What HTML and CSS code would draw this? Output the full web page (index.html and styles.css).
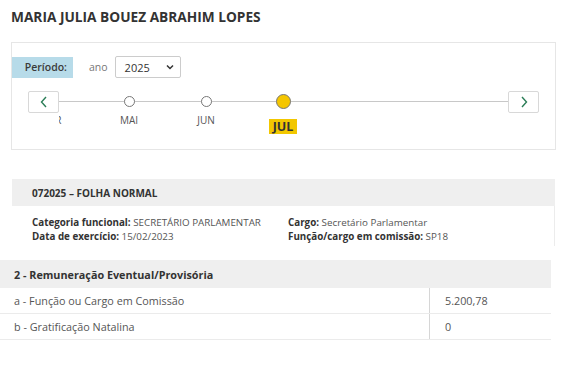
FILE: index.html
```html
<!DOCTYPE html>
<html lang="pt-BR">
<head>
<meta charset="utf-8">
<link rel="stylesheet" href="styles.css">
</head>
<body>
<h1 class="name">MARIA JULIA BOUEZ ABRAHIM LOPES</h1>

<div class="card">
  <div class="periodo">
    <span class="periodo-label">Período:</span>
    <span class="ano">ano</span>
    <div class="select"><span>2025</span>
      <svg class="caret" width="8" height="6" viewBox="0 0 8 6"><path d="M1 1.5 L4 4.5 L7 1.5" fill="none" stroke="#333" stroke-width="1.5"/></svg>
    </div>
  </div>
  <div class="timeline">
    <button class="nav"><svg width="8" height="12" viewBox="0 0 8 12"><path d="M6 1 L1.5 6 L6 11" fill="none" stroke="#2b7d57" stroke-width="1.4"/></svg></button>
    <div class="track">
      <div class="months">
        <div class="month"><span class="dot"></span><span class="mlabel">ABR</span></div>
        <div class="month"><span class="dot"></span><span class="mlabel">MAI</span></div>
        <div class="month"><span class="dot"></span><span class="mlabel">JUN</span></div>
        <div class="month active"><span class="dot"></span><span class="mlabel">JUL</span></div>
      </div>
    </div>
    <button class="nav"><svg width="8" height="12" viewBox="0 0 8 12"><path d="M2 1 L6.5 6 L2 11" fill="none" stroke="#2b7d57" stroke-width="1.4"/></svg></button>
  </div>
</div>

<div class="folha">
  <div class="folha-head">072025 – FOLHA NORMAL</div>
  <div class="folha-body">
    <div><b>Categoria funcional:</b> SECRETÁRIO PARLAMENTAR</div>
    <div><b>Cargo:</b> Secretário Parlamentar</div>
    <div><b>Data de exercício:</b> 15/02/2023</div>
    <div><b>Função/cargo em comissão:</b> SP18</div>
  </div>
</div>

<div class="table">
  <div class="thead">2 - Remuneração Eventual/Provisória</div>
  <div class="row"><div class="cell name-cell">a - Função ou Cargo em Comissão</div><div class="cell val">5.200,78</div></div>
  <div class="row"><div class="cell name-cell">b - Gratificação Natalina</div><div class="cell val">0</div></div>
</div>
</body>
</html>
```
FILE: styles.css
```css
* { box-sizing: border-box; }
body {
  margin: 0;
  font-family: "Open Sans", "DejaVu Sans", sans-serif;
  color: #444;
  background: #fff;
}
.name {
  margin: 0;
  padding: 7px 0 0 11px;
  font-size: 13.7px;
  line-height: 20px;
  font-weight: 700;
  color: #333;
}
.card {
  margin: 15px 12px 0 11px;
  height: 108px;
  border: 1px solid #e6e6e6;
}
.periodo {
  display: flex;
  align-items: center;
  margin-top: 13px;
  height: 22px;
}
.periodo-label {
  width: 61px;
  height: 21px;
  background: #b7dbe9;
  font-size: 10.5px;
  font-weight: 600;
  color: #3a3a3a;
  display: flex;
  align-items: center;
  justify-content: flex-end;
  padding-right: 6px;
}
.ano {
  margin-left: 16px;
  font-size: 10.5px;
  color: #777;
}
.select {
  margin-left: 7px;
  width: 66px;
  height: 22px;
  border: 1px solid #ccc;
  border-radius: 2px;
  display: flex;
  align-items: center;
  justify-content: space-between;
  padding: 0 6px 0 9px;
  font-size: 11px;
  color: #333;
}
.timeline {
  display: flex;
  align-items: flex-start;
  margin: 13px 16px 0 16px;
}
.nav {
  width: 31px;
  height: 22px;
  border: 1px solid #d8d8d8;
  border-radius: 2px;
  background: #fff;
  padding: 0;
  display: flex;
  align-items: center;
  justify-content: center;
  flex: none;
}
.track {
  flex: 1;
  height: 46px;
  position: relative;
  overflow: hidden;
}
.track::before {
  content: "";
  position: absolute;
  left: 0;
  right: 0;
  top: 10px;
  height: 1px;
  background: #c8c8c8;
}
.months {
  display: flex;
  margin-left: -45.5px;
  position: relative;
}
.month {
  width: 77px;
  flex: none;
  display: flex;
  flex-direction: column;
  align-items: center;
}
.dot {
  width: 11px;
  height: 11px;
  margin-top: 5px;
  border: 1px solid #777;
  border-radius: 50%;
  background: #fff;
}
.mlabel {
  margin-top: 6px;
  font-size: 10px;
  line-height: 14px;
  color: #555;
}
.month.active .dot {
  width: 15px;
  height: 15px;
  margin-top: 3px;
  background: #f5c600;
  border-color: #777;
}
.month.active .mlabel {
  margin-top: 10px;
  line-height: 15px;
  padding: 0 4px;
  background: #f2c700;
  font-weight: 700;
  font-size: 12.5px;
  color: #333;
}
.folha {
  margin: 29px 13px 0 12px;
}
.folha-head {
  height: 27px;
  background: #efefef;
  font-size: 10px;
  font-weight: 700;
  color: #333;
  display: flex;
  align-items: center;
  padding-left: 20px;
}
.folha-body {
  display: grid;
  grid-template-columns: 256px 1fr;
  padding: 10px 0 2px 20px;
  border-right: 1px solid #ececec;
  font-size: 9.8px;
  line-height: 14px;
  color: #555;
}
.folha-body b {
  font-weight: 700;
  color: #333;
}
.table {
  margin: 14px 17px 0 0;
  font-size: 10.8px;
  color: #555;
}
.thead {
  height: 28px;
  background: #efefef;
  font-weight: 700;
  color: #333;
  display: flex;
  align-items: center;
  padding-left: 14px;
}
.row {
  display: flex;
  height: 26px;
  border-bottom: 1px solid #ebebeb;
}
.cell {
  display: flex;
  align-items: center;
}
.name-cell {
  width: 430px;
  padding-left: 14px;
  border-right: 1px solid #d6d6d6;
}
.val {
  padding-left: 15px;
}
```
